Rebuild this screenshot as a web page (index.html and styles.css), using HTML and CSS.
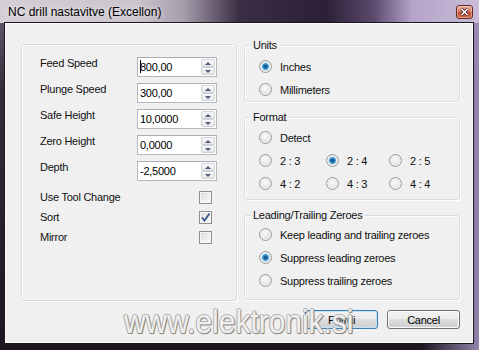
FILE: index.html
```html
<!DOCTYPE html>
<html lang="sl">
<head>
<meta charset="UTF-8">
<meta name="viewport" content="width=device-width, initial-scale=1.0">
<title>NC drill nastavitve (Excellon)</title>
<link rel="stylesheet" href="styles.css">
</head>
<body>
<div class="window">
  <div class="titlebar">
    <span class="title">NC drill nastavitve (Excellon)</span>
    <span class="close-btn">
      <svg width="9" height="8" viewBox="0 0 9 8"><path d="M1.5 1 L7.5 7 M7.5 1 L1.5 7" stroke="#3a1410" stroke-width="3"/><path d="M1.5 1 L7.5 7 M7.5 1 L1.5 7" stroke="#fff" stroke-width="1.6"/></svg>
    </span>
  </div>

  <div class="client">
    <div class="panels">
      <div class="group settings">
        <div class="field">
          <label>Feed Speed</label>
          <div class="spin">
            <span class="spin-value"><span class="caret"></span>800,00</span>
            <span class="spin-buttons"><span class="spin-up"></span><span class="spin-down"></span></span>
          </div>
        </div>
        <div class="field">
          <label>Plunge Speed</label>
          <div class="spin">
            <span class="spin-value">300,00</span>
            <span class="spin-buttons"><span class="spin-up"></span><span class="spin-down"></span></span>
          </div>
        </div>
        <div class="field">
          <label>Safe Height</label>
          <div class="spin">
            <span class="spin-value">10,0000</span>
            <span class="spin-buttons"><span class="spin-up"></span><span class="spin-down"></span></span>
          </div>
        </div>
        <div class="field">
          <label>Zero Height</label>
          <div class="spin">
            <span class="spin-value">0,0000</span>
            <span class="spin-buttons"><span class="spin-up"></span><span class="spin-down"></span></span>
          </div>
        </div>
        <div class="field">
          <label>Depth</label>
          <div class="spin">
            <span class="spin-value">-2,5000</span>
            <span class="spin-buttons"><span class="spin-up"></span><span class="spin-down"></span></span>
          </div>
        </div>

        <div class="checks">
          <div class="check-row"><span class="check-label">Use Tool Change</span><span class="checkbox"></span></div>
          <div class="check-row"><span class="check-label">Sort</span><span class="checkbox checked"><svg width="11" height="11" viewBox="0 0 11 11"><path d="M2 5.5 L4.5 8.5 L9.5 1.5" fill="none" stroke="#3b5490" stroke-width="1.8"/></svg></span></div>
          <div class="check-row"><span class="check-label">Mirror</span><span class="checkbox"></span></div>
        </div>
      </div>

      <div class="options">
        <div class="group units">
          <span class="group-title">Units</span>
          <div class="radio-row"><span class="radio checked"></span>Inches</div>
          <div class="radio-row"><span class="radio"></span>Millimeters</div>
        </div>

        <div class="group format">
          <span class="group-title">Format</span>
          <div class="format-grid">
            <div class="radio-row wide"><span class="radio"></span>Detect</div>
            <div class="radio-row"><span class="radio"></span>2 : 3</div>
            <div class="radio-row"><span class="radio checked"></span>2 : 4</div>
            <div class="radio-row"><span class="radio"></span>2 : 5</div>
            <div class="radio-row"><span class="radio"></span>4 : 2</div>
            <div class="radio-row"><span class="radio"></span>4 : 3</div>
            <div class="radio-row"><span class="radio"></span>4 : 4</div>
          </div>
        </div>

        <div class="group zeroes">
          <span class="group-title">Leading/Trailing Zeroes</span>
          <div class="radio-row"><span class="radio"></span>Keep leading and trailing zeroes</div>
          <div class="radio-row"><span class="radio checked"></span>Suppress leading zeroes</div>
          <div class="radio-row"><span class="radio"></span>Suppress trailing zeroes</div>
        </div>
      </div>
    </div>

    <div class="buttons">
      <button class="btn default">Potrdi</button>
      <button class="btn">Cancel</button>
    </div>
  </div>

  <div class="watermark">www.elektronik.si</div>
</div>
</body>
</html>
```

FILE: styles.css
```css
body {
  margin: 0;
  padding: 0;
  font-family: "Liberation Sans", Arial, sans-serif;
}
.window {
  position: relative;
  width: 479px;
  height: 350px;
  overflow: hidden;
  background:
    linear-gradient(90deg, rgba(0, 0, 0, 0) 88%, rgba(168, 150, 196, 0.85) 100%),
    linear-gradient(180deg, #6c6474 0%, #352c3c 25%, #1c1620 100%);
}
.titlebar {
  display: flex;
  align-items: center;
  height: 23px;
  padding-left: 8px;
  background: linear-gradient(90deg, #d3cfd5 0%, #cbc5cd 28%, #a89fae 38%, #3a2e44 50%, #2c2036 68%, #5a4a6c 78%, #b4a4c8 86%, #c8bcd8 100%);
}
.title {
  font-size: 12px;
  color: #000;
  text-shadow: 0 0 6px #fff;
}
.close-btn {
  display: flex;
  align-items: center;
  justify-content: center;
  align-self: flex-start;
  box-sizing: border-box;
  width: 17px;
  height: 14px;
  margin: 5px 6px 0 auto;
  border: 1px solid #5e2a24;
  border-radius: 3px;
  background: linear-gradient(#eab0a0 0%, #d87a64 45%, #c24e34 55%, #d06a48 100%);
  box-shadow: inset 0 0 0 1px rgba(255, 220, 210, 0.5);
}
.client {
  box-sizing: border-box;
  height: 320px;
  margin: 0 6px 0 5px;
  padding: 20px 12px 0 15px;
  background: #f0f0f0;
  border: 1px solid #fbfbfb;
  box-shadow: 0 0 0 1px #1c1622;
  font-size: 11px;
  letter-spacing: -0.25px;
  color: #111;
}
.panels {
  display: flex;
  gap: 7px;
}
.group {
  position: relative;
  box-sizing: border-box;
  width: 216px;
  border: 1px solid #d5dfe5;
  border-radius: 3px;
  box-shadow: inset 1px 1px 0 #fff, 1px 1px 0 #fff;
}
.group-title {
  position: absolute;
  top: -7px;
  left: 6px;
  padding: 0 2px;
  line-height: 13px;
  background: #f0f0f0;
}

/* left panel */
.settings {
  height: 257px;
  padding: 12px 0 0 18px;
}
.field {
  display: flex;
  align-items: flex-start;
  height: 20px;
  margin-bottom: 6px;
}
.field label {
  width: 97px;
  line-height: 13px;
}
.spin {
  display: flex;
  box-sizing: border-box;
  width: 80px;
  height: 20px;
  background: #fff;
  border: 1px solid #b5b8bf;
  border-top-color: #abadb3;
}
.spin-value {
  flex: 1;
  padding-left: 2px;
  line-height: 18px;
  color: #000;
}
.caret {
  display: inline-block;
  width: 1px;
  height: 13px;
  margin-right: -1px;
  vertical-align: -2px;
  background: #000;
}
.spin-buttons {
  display: flex;
  flex-direction: column;
  width: 14px;
  padding: 1px 1px 1px 0;
}
.spin-up, .spin-down {
  flex: 1;
  display: flex;
  align-items: center;
  justify-content: center;
  border: 1px solid #cfd2d6;
  border-radius: 2px;
  background: linear-gradient(#fbfbfb, #e6e6e6);
}
.spin-up::after {
  content: "";
  border-left: 3px solid transparent;
  border-right: 3px solid transparent;
  border-bottom: 3px solid #4c5d7c;
}
.spin-down::after {
  content: "";
  border-left: 3px solid transparent;
  border-right: 3px solid transparent;
  border-top: 3px solid #4c5d7c;
}
.checks {
  margin-top: 2px;
}
.check-row {
  display: flex;
  align-items: center;
  height: 20px;
}
.check-label {
  width: 159px;
}
.checkbox {
  display: flex;
  align-items: center;
  justify-content: center;
  box-sizing: border-box;
  width: 13px;
  height: 13px;
  border: 1px solid #8f8f8f;
  background: linear-gradient(135deg, #d8d8d8 0%, #eeeeee 55%, #fdfdfd 100%);
  box-shadow: inset 0 0 0 1px #f6f6f6;
}

/* right panel */
.options {
  display: flex;
  flex-direction: column;
  gap: 15px;
  margin-top: 1px;
}
.units {
  padding: 9px 0 0 14px;
}
.format {
  padding: 8px 0 4px 14px;
}
.zeroes {
  padding: 7px 0 7px 14px;
}
.format-grid {
  display: grid;
  grid-template-columns: 67px 63px auto;
}
.format-grid .wide {
  grid-column: 1 / -1;
}
.radio-row {
  display: flex;
  align-items: center;
  height: 23px;
}
.radio {
  box-sizing: border-box;
  width: 13px;
  height: 13px;
  margin-right: 8px;
  border-radius: 50%;
  border: 1px solid #989b9e;
  background: radial-gradient(circle at 45% 40%, #fbfbfb 0%, #e6e6e6 55%, #cdcdcd 100%);
  box-shadow: inset 0 0 0 1px #f0f0f0;
}
.radio.checked {
  background:
    radial-gradient(circle at 50% 50%, #0f3f6e 0, #1f67a3 1.5px, #4aa3dc 3px, #9bd3f2 3.6px, rgba(255, 255, 255, 0) 4.2px),
    radial-gradient(circle at 45% 40%, #fbfbfb 0%, #e6e6e6 55%, #cdcdcd 100%);
}

/* bottom buttons */
.buttons {
  display: flex;
  justify-content: flex-end;
  gap: 9px;
  margin-top: 9px;
}
.btn {
  box-sizing: border-box;
  width: 73px;
  height: 19px;
  padding: 0;
  font-family: "Liberation Sans", Arial, sans-serif;
  font-size: 11px;
  letter-spacing: -0.25px;
  color: #000;
  border: 1px solid #707070;
  border-radius: 3px;
  background: linear-gradient(#f2f2f2 0%, #ebebeb 50%, #dddddd 50%, #cfcfcf 100%);
  box-shadow: inset 0 0 0 1px #fcfcfc;
}
.btn.default {
  border-color: #3c7fb1;
  box-shadow: inset 0 0 0 1px #bfe4f8;
}

/* site watermark over the dialog */
.watermark {
  position: absolute;
  left: 124px;
  top: 304px;
  z-index: 2;
  font-family: "Liberation Sans", Arial, sans-serif;
  font-size: 34px;
  line-height: 34px;
  color: #efefef;
  text-shadow: -1px 0 0 #a8a8a8, 0 -1px 0 #b4b4b4, 1px 0 0 #8c8c8c, 0 1px 0 #8c8c8c, 1px 1px 1px #777;
  transform: scaleX(0.88);
  transform-origin: 0 0;
  white-space: nowrap;
  pointer-events: none;
}
```
